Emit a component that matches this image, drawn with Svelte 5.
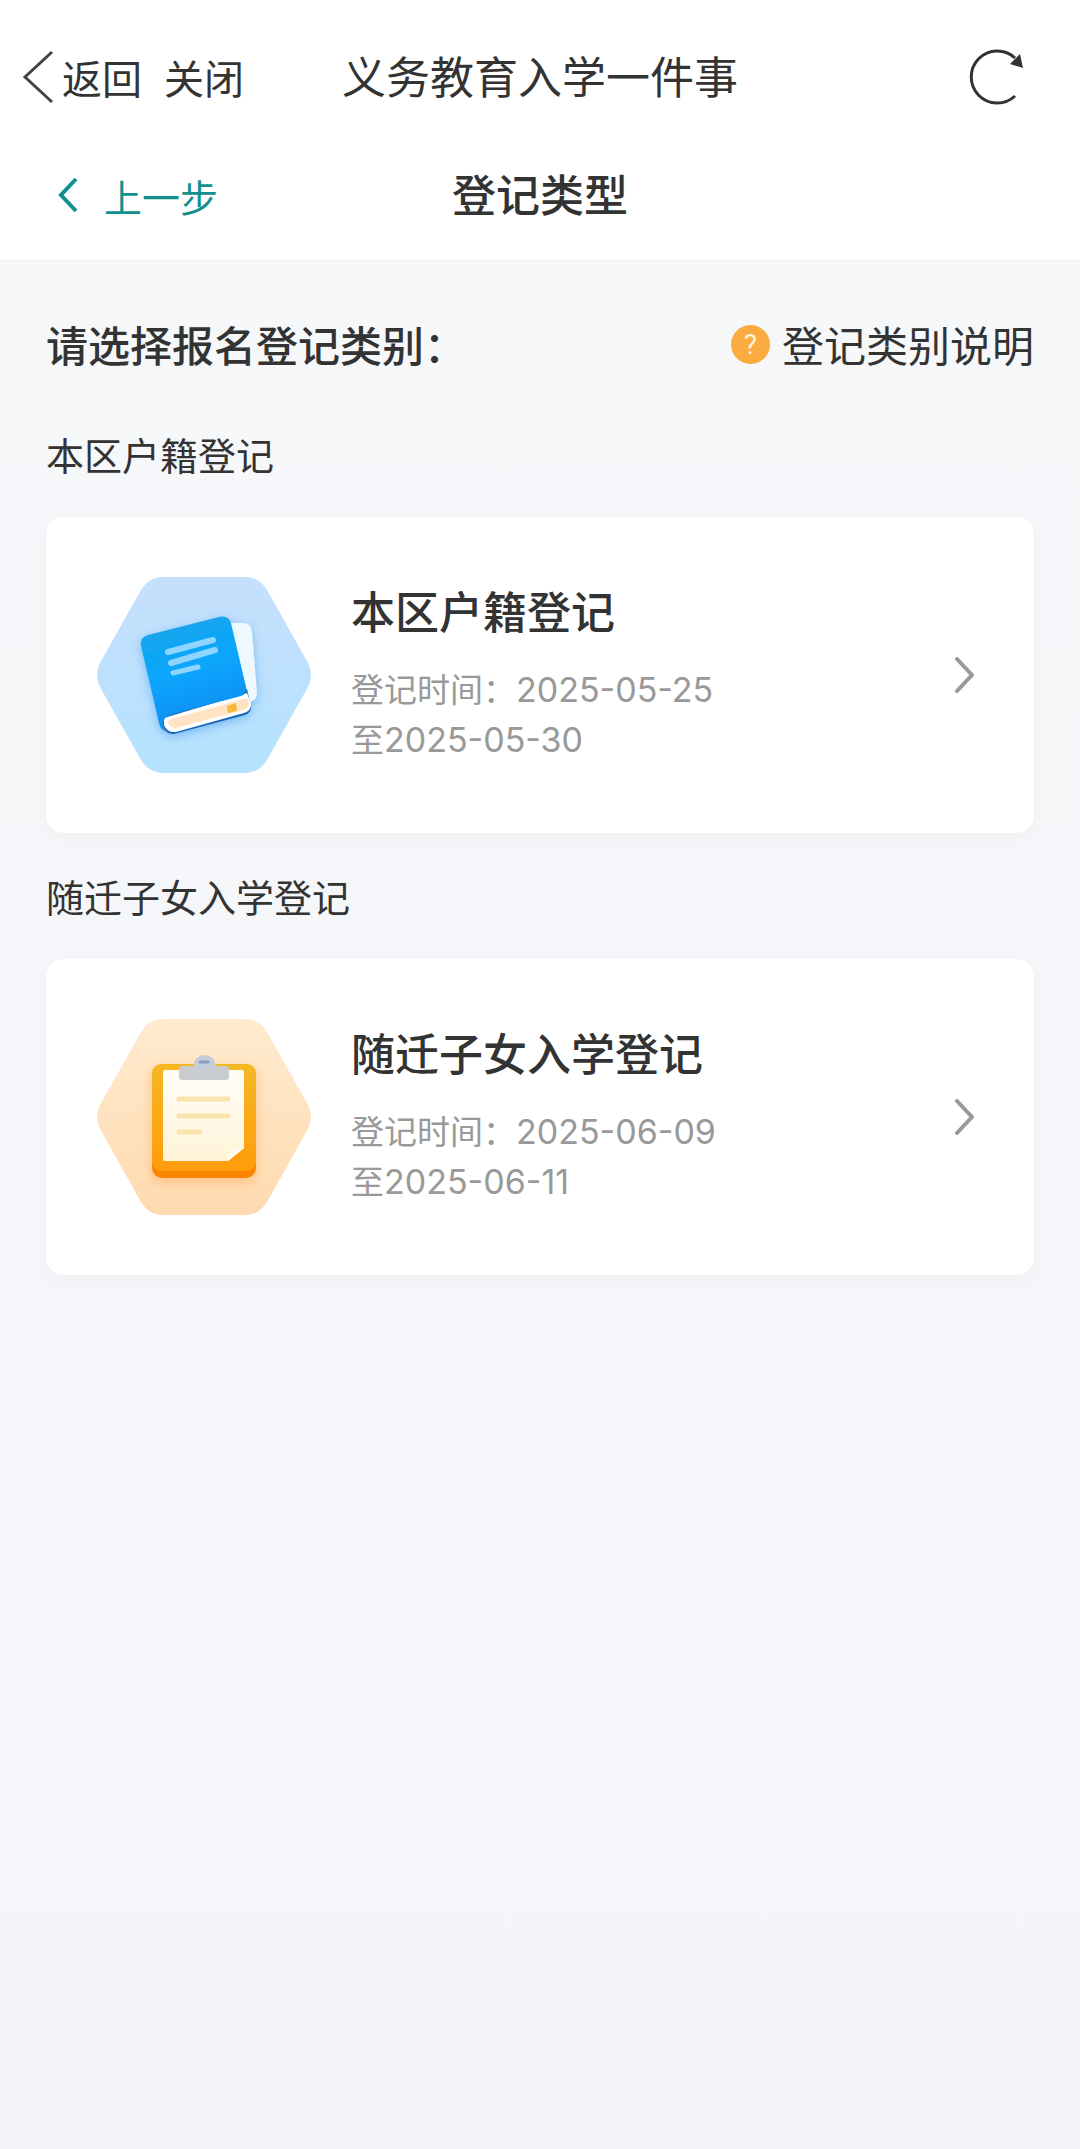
<script>
    const sections = [
        {
            label: "本区户籍登记",
            title: "本区户籍登记",
            start: "2025-05-25",
            end: "2025-05-30",
            icon: "book",
        },
        {
            label: "随迁子女入学登记",
            title: "随迁子女入学登记",
            start: "2025-06-09",
            end: "2025-06-11",
            icon: "clipboard",
        },
    ];

    const hexagon =
        "M66 0H148Q162 0 170 13L211 86Q217 98 211 110L170 183Q162 196 148 196H66Q52 196 44 183L3 110Q-3 98 3 86L44 13Q52 0 66 0Z";
</script>

<div class="page">
    <header>
        <div class="bar">
            <div class="actions">
                <button class="back">
                    <svg width="32" height="54" viewBox="0 0 32 54" aria-hidden="true">
                        <path d="M30 2L3 27L30 52" fill="none" stroke="#444" stroke-width="3" />
                    </svg>
                    返回
                </button>
                <button>关闭</button>
            </div>
            <span class="app-title">义务教育入学一件事</span>
            <button class="refresh" aria-label="刷新">
                <svg width="58" height="58" viewBox="0 0 58 58" aria-hidden="true">
                    <path d="M47 10A26 26 0 1 0 47 48" fill="none" stroke="#333" stroke-width="3" />
                    <path d="M52 6L55 20L42 16Z" fill="#333" />
                </svg>
            </button>
        </div>
        <div class="bar">
            <button class="prev">
                <svg width="20" height="36" viewBox="0 0 20 36" aria-hidden="true">
                    <path d="M18 2L3 18L18 34" fill="none" stroke="#11908f" stroke-width="4" />
                </svg>
                上一步
            </button>
            <h1>登记类型</h1>
        </div>
    </header>

    <main>
        <div class="intro">
            <h2>请选择报名登记类别：</h2>
            <button class="help"><span class="mark" aria-hidden="true">?</span>登记类别说明</button>
        </div>

        {#each sections as section}
            <section>
                <h3>{section.label}</h3>
                <a class="card" href="#{section.icon}">
                    <svg class="icon" width="214" height="196" viewBox="0 0 214 196" aria-hidden="true">
                        {#if section.icon === "book"}
                            <defs>
                                <linearGradient id="book-bg" x1="0" y1="0" x2="0" y2="1">
                                    <stop offset="0" stop-color="#c5e0fc" />
                                    <stop offset="1" stop-color="#b5e2ff" />
                                </linearGradient>
                                <linearGradient id="book-cover" x1="0" y1="0" x2="0.3" y2="1">
                                    <stop offset="0" stop-color="#1ba4e6" />
                                    <stop offset="0.55" stop-color="#0aa6fd" />
                                    <stop offset="1" stop-color="#098df0" />
                                </linearGradient>
                                <filter id="book-shadow" x="-20%" y="-20%" width="140%" height="150%">
                                    <feDropShadow dx="0" dy="3" stdDeviation="5" flood-color="#3c93e8" flood-opacity="0.5" />
                                </filter>
                            </defs>
                            <path d={hexagon} fill="url(#book-bg)" />
                            <g filter="url(#book-shadow)">
                                <path d="M130 46H146Q154 46 155 55L160 116Q160 122 155 124L145 128Z" fill="#eef9ff" />
                                <path d="M64 134L65 146Q67 158 77 157L148 138Q154 136 154 130L150 112Z" fill="#1768b8" />
                                <path d="M67 141L150 116L154 127Q154 134 147 136L79 155Q70 156 67 148Z" fill="#fff" />
                                <path d="M75 142L150 121L152 126Q152 131 146 133L79 151Q72 150 71 146Q71 143 75 142Z" fill="#ffe3c2" />
                                <path d="M130 129L139 126L140 134L131 136Z" fill="#f5b93c" />
                                <path
                                    d="M51 58L122 40Q131 38 134 46L149 110Q150 117 144 119L76 137Q66 139 66 148L67 154Q63 151 62 146L44 69Q42 61 51 58Z"
                                    fill="url(#book-cover)"
                                />
                            </g>
                            <g stroke="#8ed5ff" stroke-linecap="round">
                                <path d="M71 75L116 63M74 86L118 73" stroke-width="6" />
                                <path d="M76 96L101 90" stroke-width="5" />
                            </g>
                        {:else}
                            <defs>
                                <linearGradient id="clip-bg" x1="0" y1="0" x2="0" y2="1">
                                    <stop offset="0" stop-color="#ffebcf" />
                                    <stop offset="1" stop-color="#ffdab0" />
                                </linearGradient>
                                <linearGradient id="clip-board" x1="0" y1="0" x2="0" y2="1">
                                    <stop offset="0" stop-color="#f5b823" />
                                    <stop offset="1" stop-color="#ff9c0c" />
                                </linearGradient>
                                <linearGradient id="clip-paper" x1="0" y1="0" x2="0" y2="1">
                                    <stop offset="0" stop-color="#fffdf8" />
                                    <stop offset="1" stop-color="#fff4d8" />
                                </linearGradient>
                                <filter id="clip-shadow" x="-20%" y="-20%" width="140%" height="150%">
                                    <feDropShadow dx="0" dy="4" stdDeviation="6" flood-color="#ff9a3c" flood-opacity="0.45" />
                                </filter>
                            </defs>
                            <path d={hexagon} fill="url(#clip-bg)" />
                            <g filter="url(#clip-shadow)">
                                <rect x="55" y="60" width="104" height="99" rx="10" fill="#fb8504" />
                                <rect x="55" y="45" width="104" height="107" rx="9" fill="url(#clip-board)" />
                            </g>
                            <path d="M68 51H145Q147 51 147 53V129L131 142H68Q66 142 66 140V53Q66 51 68 51Z" fill="url(#clip-paper)" />
                            <path d="M147 129L131 142L134 131Q135 129 137 129Z" fill="#fffaf0" />
                            <path
                                d="M85 47H96Q98 36 108 36Q117 36 119 47H129Q132 47 132 50V58Q132 61 129 61H85Q82 61 82 58V50Q82 47 85 47Z"
                                fill="#c9cdd0"
                            />
                            <path d="M98 46Q99 37 108 37Q116 37 118 46L114 51H102Z" fill="#c3cddd" />
                            <path d="M103 43H111" stroke="#8c9cc4" stroke-width="3" stroke-linecap="round" />
                            <path d="M82 80H131M82 97H131M82 113H103" stroke="#fbe3ae" stroke-width="5" stroke-linecap="round" />
                        {/if}
                    </svg>
                    <div class="text">
                        <h4>{section.title}</h4>
                        <p>
                            <span>登记时间：<time>{section.start}</time></span>
                            <span>至<time>{section.end}</time></span>
                        </p>
                    </div>
                    <svg width="20" height="36" viewBox="0 0 20 36" aria-hidden="true">
                        <path
                            d="M2 2L17 18L2 34"
                            fill="none"
                            stroke="#999"
                            stroke-width="4"
                            stroke-linecap="round"
                            stroke-linejoin="round"
                        />
                    </svg>
                </a>
            </section>
        {/each}
    </main>
</div>

<style>
    :global(body) {
        background: #f4f6f9;
    }

    .page {
        min-height: 100vh;
        color: #333;
        background: linear-gradient(#f6f8fa, #f3f5f8);
        font-family: "Noto Sans CJK SC", sans-serif;
    }

    h1,
    h2,
    h3,
    h4,
    p {
        margin: 0;
    }

    button {
        display: flex;
        align-items: center;
        padding: 0;
        border: 0;
        background: none;
        color: inherit;
        font: inherit;
        cursor: pointer;
    }

    svg {
        flex: none;
    }

    header {
        padding: 18px 0 6px;
        background: #fff;
        border-bottom: 2px solid #f2f3f4;
    }

    .bar {
        display: grid;
        grid-template-columns: 1fr auto 1fr;
        align-items: center;
        height: 118px;
    }

    .actions {
        display: flex;
        gap: 22px;
        padding-left: 22px;
        font-size: 40px;
    }

    .back {
        gap: 8px;
    }

    .app-title,
    h1 {
        padding-bottom: 4px;
        font-size: 44px;
        line-height: 60px;
    }

    .app-title {
        font-weight: 400;
    }

    h1 {
        font-weight: 500;
    }

    .refresh {
        justify-self: end;
        margin-right: 54px;
    }

    .prev {
        gap: 26px;
        padding-left: 58px;
        color: #11908f;
        font-size: 38px;
    }

    main {
        padding: 52px 46px;
    }

    .intro {
        display: flex;
        align-items: center;
        justify-content: space-between;
        margin-bottom: 17px;
        font-size: 42px;
        line-height: 60px;
    }

    h2 {
        font-size: 42px;
        font-weight: 500;
    }

    .help {
        gap: 12px;
    }

    .mark {
        width: 39px;
        height: 39px;
        border-radius: 50%;
        background: #fbab3f;
        color: #fff3dc;
        font-family: Roboto, sans-serif;
        font-size: 28px;
        line-height: 39px;
        text-align: center;
    }

    section {
        padding-top: 34px;
    }

    h3 {
        margin-bottom: 34px;
        font-size: 38px;
        font-weight: 400;
        line-height: 58px;
    }

    .card {
        display: flex;
        align-items: center;
        padding: 60px 59px 60px 51px;
        border-radius: 18px;
        background: #fff;
        box-shadow: 0 6px 20px rgba(0, 0, 0, 0.03);
        color: inherit;
        text-decoration: none;
    }

    .text {
        flex: 1;
        margin-left: 40px;
        padding-bottom: 5px;
    }

    h4 {
        margin-bottom: 25px;
        font-size: 44px;
        font-weight: 500;
        line-height: 56px;
    }

    p {
        color: #999;
        font-size: 33px;
        line-height: 50px;
    }

    p span {
        display: block;
    }

    time {
        font-family: Inter, sans-serif;
        font-size: 34px;
        line-height: 1;
    }
</style>
